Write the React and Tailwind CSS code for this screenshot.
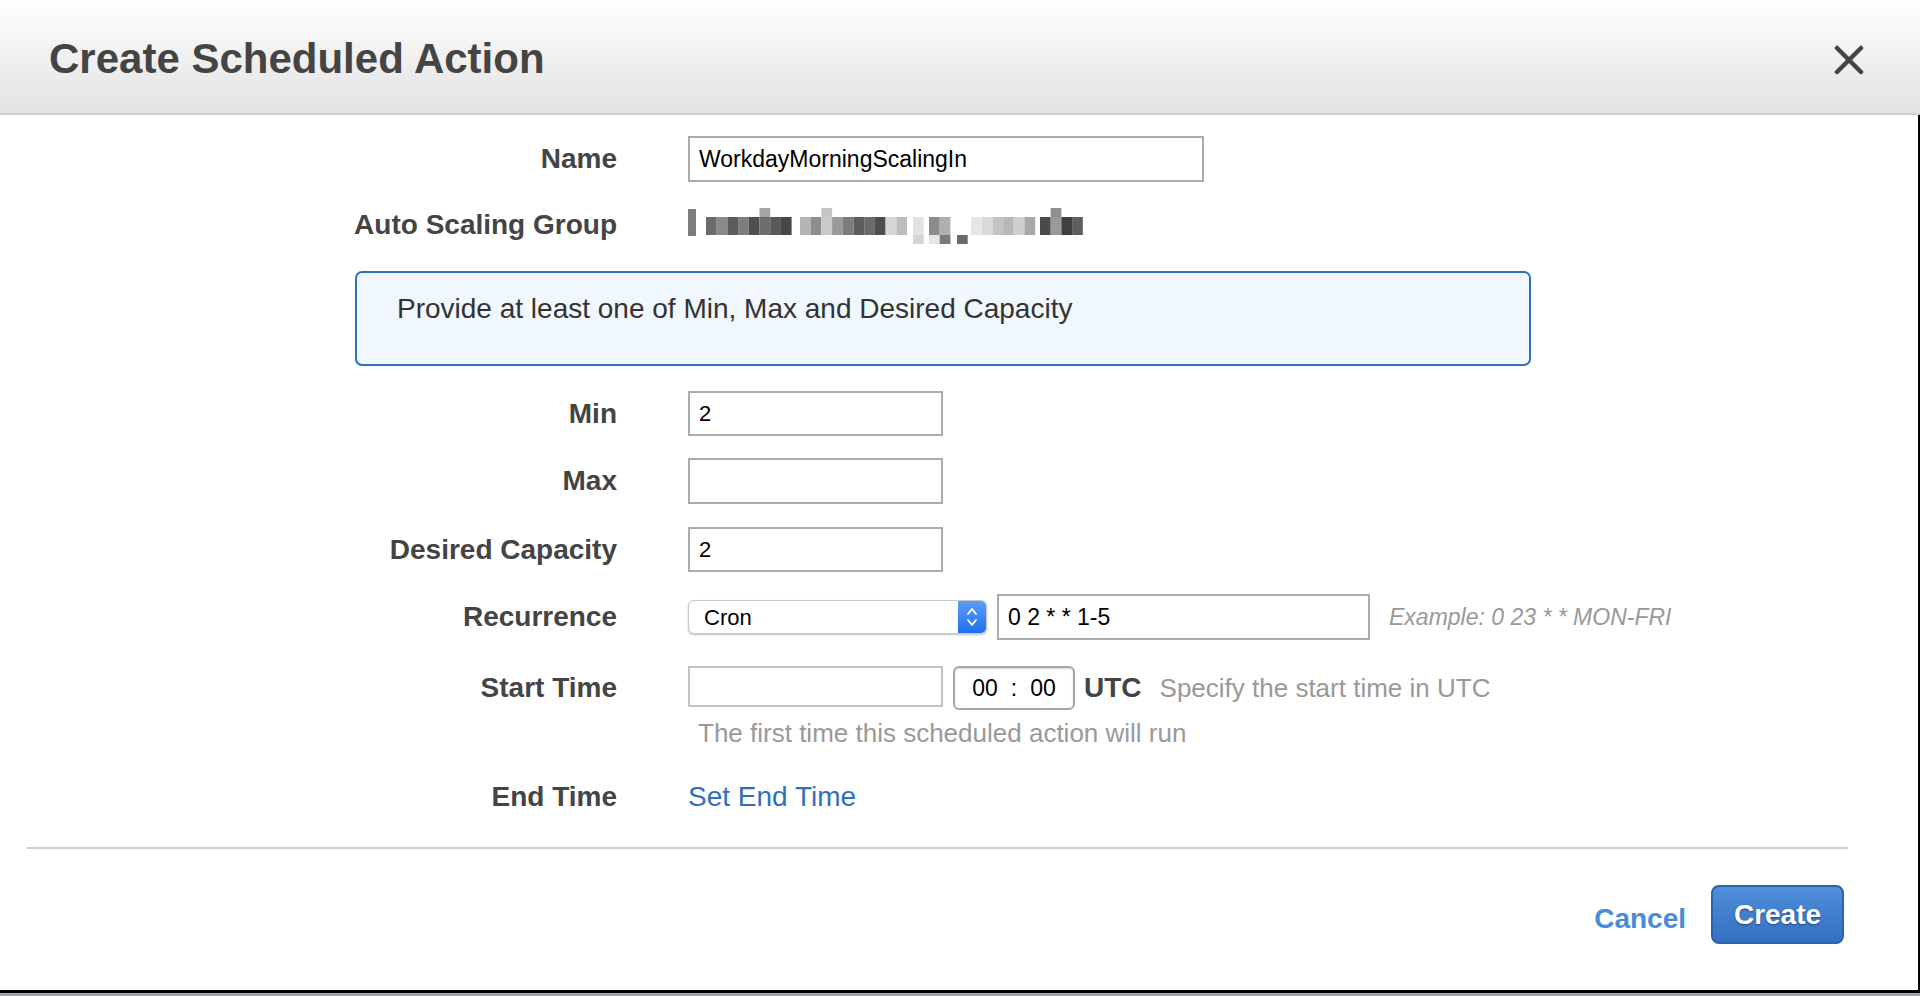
import React from "react";

const segments = [
  { x: 18, mids: ["#6b6b6b", "#8a8a8a", "#5c5c5c", "#7d7d7d", "#4f4f4f", "#6e6e6e", "#585858", "#474747"], tops: { 5: "#a5a5a5" } },
  { x: 112, mids: ["#b5b5b5", "#8d8d8d", "#c9c9c9", "#9a9a9a", "#7c7c7c", "#5d5d5d", "#6a6a6a", "#4e4e4e", "#d6d6d6", "#bdbdbd"], tops: { 2: "#c4c4c4" } },
  { x: 225, mids: ["#e2e2e2"], bottoms: { 0: "#d4d4d4" } },
  { x: 241, mids: ["#8c8c8c", "#b0b0b0"], bottoms: { 0: "#e6e6e6", 1: "#7a7a7a" } },
  { x: 269, mids: [null], bottoms: { 0: "#6a6a6a" } },
  { x: 283, mids: ["#e6e6e6", "#d9d9d9", "#c4c4c4", "#b8b8b8", "#cfcfcf", "#a8a8a8"] },
  { x: 352, mids: ["#4a4a4a", "#9a9a9a", "#3f3f3f", "#5e5e5e"], tops: { 1: "#8f8f8f" } },
];

function BlurredValue() {
  const cell = 10.7;
  return (
    <svg width="400" height="40" viewBox="0 0 400 40">
      <rect x="0" y="4" width="8" height="27" fill="#7d7d7d" />
      {segments.map((seg, si) =>
        seg.mids.map((c, i) => {
          const x = seg.x + i * cell;
          return (
            <g key={`${si}-${i}`}>
              {c && <rect x={x} y="12" width={cell} height="18" fill={c} />}
              {seg.tops && seg.tops[i] && <rect x={x} y="3" width={cell} height="9" fill={seg.tops[i]} />}
              {seg.bottoms && seg.bottoms[i] && <rect x={x} y="30" width={cell} height="9" fill={seg.bottoms[i]} />}
            </g>
          );
        })
      )}
    </svg>
  );
}

function Label({ children }) {
  return (
    <div className="w-[617px] shrink-0 text-right text-[28px] font-bold leading-none text-[#444]">
      {children}
    </div>
  );
}

function Row({ label, className = "", children }) {
  return (
    <div className={`flex items-center ${className}`}>
      <Label>{label}</Label>
      <div className="ml-[71px] flex items-center">{children}</div>
    </div>
  );
}

function TextBox({ value, className = "" }) {
  return (
    <div className={`flex items-center border-2 border-[#ababab] bg-white pl-[9px] text-[22px] text-black ${className}`}>
      {value}
    </div>
  );
}

export default function App() {
  return (
    <div className="h-[996px] w-[1920px] overflow-hidden bg-[#9ea3a9] font-['Liberation_Sans',Arial,sans-serif]">
      <div className="flex h-[993px] flex-col border-b-[3px] border-black bg-white">
        <div className="flex h-[115px] shrink-0 items-center justify-between border-b-2 border-[#cfcfcf] bg-gradient-to-b from-[#ffffff] to-[#e2e2e2] pl-[49px] pr-[56px]">
          <h1 className="pt-[3px] text-[42px] font-bold text-[#444]">Create Scheduled Action</h1>
          <svg width="30" height="30" viewBox="0 0 30 30" className="mt-[7px]">
            <path d="M3 3 L27 27 M27 3 L3 27" stroke="#444" strokeWidth="4.5" strokeLinecap="round" />
          </svg>
        </div>

        <div className="flex flex-1 flex-col border-r-2 border-black">
          <Row label="Name" className="mt-[21px] h-[46px]">
            <TextBox value="WorkdayMorningScalingIn" className="h-[46px] w-[516px] text-[23px]" />
          </Row>

          <Row label="Auto Scaling Group" className="mt-[20px] h-[46px]">
            <BlurredValue />
          </Row>

          <div className="ml-[355px] mt-[23px] h-[95px] w-[1176px] rounded-[7px] border-2 border-[#2f6fc5] bg-[#f0f7fe] pl-[40px] pt-[22px] text-[28px] leading-none text-[#333]">
            Provide at least one of Min, Max and Desired Capacity
          </div>

          <Row label="Min" className="mt-[25px] h-[45px]">
            <TextBox value="2" className="h-[45px] w-[255px]" />
          </Row>
          <Row label="Max" className="mt-[22px] h-[46px]">
            <TextBox value="" className="h-[46px] w-[255px]" />
          </Row>
          <Row label="Desired Capacity" className="mt-[23px] h-[45px]">
            <TextBox value="2" className="h-[45px] w-[255px]" />
          </Row>

          <Row label="Recurrence" className="mt-[22px] h-[46px]">
            <div className="flex h-[34px] w-[299px] items-stretch overflow-hidden rounded-[6px] border border-[#c8c8c8] bg-white shadow-[0_1px_2px_rgba(0,0,0,0.25)]">
              <div className="flex flex-1 items-center pl-[15px] text-[22px] text-black">Cron</div>
              <div className="flex w-[28px] items-center justify-center bg-gradient-to-b from-[#5b9df8] to-[#1f6ef0]">
                <svg width="14" height="24" viewBox="0 0 14 24">
                  <path d="M3 9 L7 4 L11 9 M3 15 L7 20 L11 15" stroke="#fff" strokeWidth="1.8" fill="none" strokeLinecap="round" strokeLinejoin="round" />
                </svg>
              </div>
            </div>
            <TextBox value="0 2 * * 1-5" className="ml-[10px] h-[46px] w-[373px] text-[23px]" />
            <span className="ml-[19px] text-[23px] italic text-[#999]">Example: 0 23 * * MON-FRI</span>
          </Row>

          <Row label="Start Time" className="mt-[26px] h-[44px]">
            <div className="flex h-[44px] items-start">
              <div className="h-[41px] w-[255px] border-2 border-[#c4c4c4] bg-white" />
              <div className="ml-[10px] flex h-[44px] w-[122px] items-center justify-center gap-[13px] rounded-[6px] border-2 border-[#a6a6a6] bg-white text-[23px] text-black shadow-[inset_0_1px_2px_rgba(0,0,0,0.15)]">
                <span>00</span>
                <span>:</span>
                <span>00</span>
              </div>
            </div>
            <span className="ml-[9px] text-[28px] font-bold text-[#444]">UTC</span>
            <span className="ml-[18px] text-[26px] text-[#999]">Specify the start time in UTC</span>
          </Row>

          <div className="ml-[698px] mt-[8px] text-[26px] leading-[30px] text-[#999]">
            The first time this scheduled action will run
          </div>

          <Row label="End Time" className="mt-[29px] h-[40px]">
            <span className="text-[28px] text-[#2f6fbd]">Set End Time</span>
          </Row>

          <div className="ml-[27px] mt-[30px] h-[2px] w-[1821px] bg-[#cccccc]" />

          <div className="mt-[36px] flex items-center justify-end pr-[74px]">
            <span className="mt-[8px] text-[28px] font-bold text-[#4a8bd8]">Cancel</span>
            <button className="ml-[25px] h-[59px] w-[133px] rounded-[8px] border-2 border-[#2c63ad] bg-gradient-to-b from-[#4f8fda] to-[#3570c2] text-[28px] font-bold text-white [text-shadow:0_1px_2px_rgba(0,0,0,0.45)]">
              Create
            </button>
          </div>
        </div>
      </div>
    </div>
  );
}
